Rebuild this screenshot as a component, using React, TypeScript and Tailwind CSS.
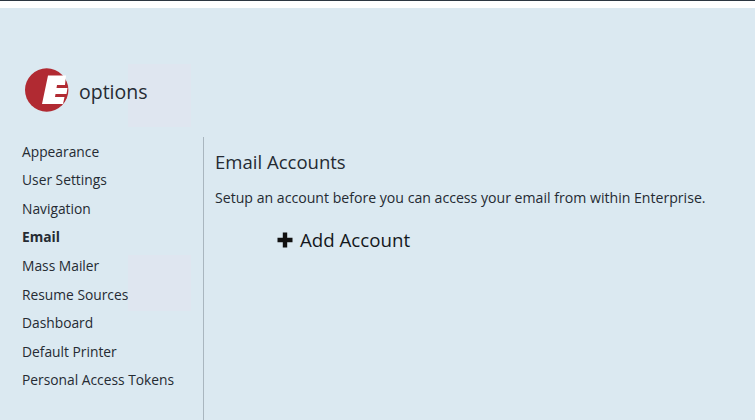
const navItems = [
  "Appearance",
  "User Settings",
  "Navigation",
  "Email",
  "Mass Mailer",
  "Resume Sources",
  "Dashboard",
  "Default Printer",
  "Personal Access Tokens",
]

function Logo() {
  return (
    <svg width="46" height="46" viewBox="0 0 46 46" className="shrink-0">
      <circle cx="21.7" cy="23" r="21.7" fill="#b12a32" />
      <path
        d="M23 8.5H41L40 18H32L31.5 21H42.5L41.5 27H30.5L30 30H39.5L38 37H17Z"
        fill="#ffffff"
      />
    </svg>
  )
}

export default function App() {
  return (
    <div className="relative h-[420px] w-[755px] overflow-hidden bg-white font-['Open_Sans',sans-serif] text-[#252b33]">
      <div className="h-px bg-[#2b3640]" />
      <div className="mt-[7px] flex h-[412px] flex-col bg-[#dbe9f1]">
        {/* header */}
        <div className="relative flex h-[129px] items-end pb-[24px] pl-[25px]">
          <div className="absolute left-[128px] top-[56px] h-[63px] w-[63px] bg-[#dfe6f0]" />
          <Logo />
          <span className="relative mb-[7px] ml-[8px] text-[19.5px] leading-[28px]">options</span>
        </div>

        <div className="flex min-h-0 flex-1">
          {/* sidebar */}
          <nav className="relative flex w-[204px] shrink-0 flex-col border-r-[1px] border-[#a9b6bf] pl-[22px] pt-[0.85px]">
            <div className="absolute left-[128px] top-[118px] h-[56px] w-[63px] bg-[#dfe6f0]" />
            {navItems.map((item) => (
              <a
                key={item}
                className={`relative h-[28.55px] text-[13.8px] leading-[28.55px] ${item === "Email" ? "font-bold" : ""}`}
              >
                {item}
              </a>
            ))}
          </nav>

          {/* content */}
          <main className="flex-1 pl-[11px] pt-[12px]">
            <h1 className="text-[18.55px] leading-[26px]">Email Accounts</h1>
            <p className="mt-[13px] text-[14.12px] leading-[20px]">
              Setup an account before you can access your email from within Enterprise.
            </p>
            <button className="ml-[62px] mt-[19px] flex items-center gap-[7px] text-[18.7px] leading-[26px] text-[#14181d]">
              <svg width="16" height="16" viewBox="0 0 16 16">
                <path d="M5.8 .5H10.2V5.8H15.5V10.2H10.2V15.5H5.8V10.2H.5V5.8H5.8Z" fill="#111111" />
              </svg>
              Add Account
            </button>
          </main>
        </div>
      </div>
    </div>
  )
}
